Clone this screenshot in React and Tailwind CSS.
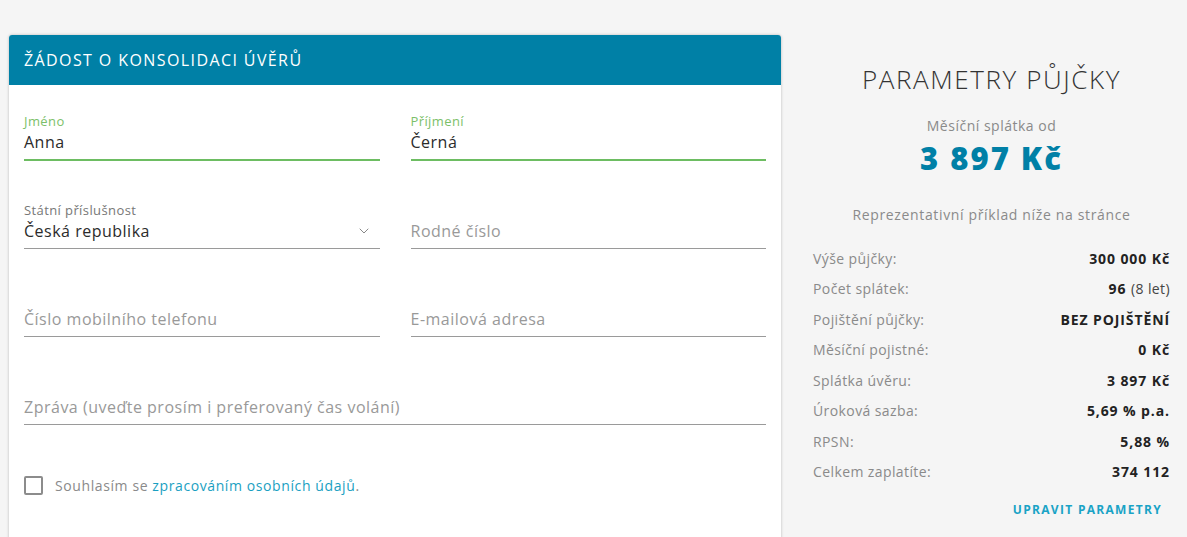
import { ChevronDown } from 'lucide-react'

const font = { fontFamily: '"Open Sans", "Noto Sans", sans-serif' }

function Field({ label, value, placeholder, active, select, className = '' }) {
  return (
    <div className={`flex flex-col ${className}`}>
      <span className={`h-4 text-[13px] leading-4 tracking-[0.4px] ${active ? 'text-[#7cbf6a]' : 'text-[#777]'}`}>
        {label}
      </span>
      <div
        className={`mt-[2px] flex items-center justify-between pb-[6px] ${
          active ? 'border-b-2 border-[#6dbd62]' : 'border-b border-[#9a9a9a]'
        }`}
      >
        <span className={`text-[16px] leading-[22px] tracking-[0.5px] ${value ? 'text-[#2b2b2b]' : 'text-[#999]'}`}>
          {value || placeholder}
        </span>
        {select && <ChevronDown className="mr-2 h-4 w-4 text-[#888]" strokeWidth={1.5} />}
      </div>
    </div>
  )
}

function Row({ label, children }) {
  return (
    <div className="flex h-[30.5px] items-center justify-between text-[14px] tracking-[0.4px]">
      <span className="text-[#8a8a8a]">{label}</span>
      <span className="font-bold tracking-[0.9px] text-[#222]">{children}</span>
    </div>
  )
}

export default function App() {
  return (
    <div className="flex min-h-screen bg-[#f5f5f5] pl-[9px] pt-[35px]" style={font}>
      <div className="h-[520px] w-[772px] overflow-hidden rounded-t-[3px] bg-white shadow-[0_0_3px_rgba(0,0,0,0.25)]">
        <div className="flex h-[50px] items-center bg-[#0080a6] px-[15px] text-[16px] tracking-[1.4px] text-white">
          ŽÁDOST O KONSOLIDACI ÚVĚRŮ
        </div>
        <div className="px-[15px] pt-[28px]">
          <div className="grid grid-cols-2 gap-x-[31px] gap-y-[41px]">
            <Field label="Jméno" value="Anna" active />
            <Field label="Příjmení" value="Černá" active />
            <Field label="Státní příslušnost" value="Česká republika" select />
            <Field placeholder="Rodné číslo" />
            <Field placeholder="Číslo mobilního telefonu" />
            <Field placeholder="E-mailová adresa" />
            <Field placeholder="Zpráva (uveďte prosím i preferovaný čas volání)" className="col-span-2" />
          </div>
          <div className="mt-[50px] flex items-center gap-[12px]">
            <span className="h-[19px] w-[19px] rounded-[2px] border-2 border-[#8c8c8c]" />
            <span className="text-[14px] tracking-[0.6px] text-[#8a8a8a]">
              Souhlasím se <span className="text-[#1a9fc2]">zpracováním osobních údajů</span>.
            </span>
          </div>
        </div>
      </div>
      <div className="ml-[15px] flex w-[391px] flex-col px-[17px] pt-[28px]">
        <h1 className="text-center text-[26px] font-light leading-8 tracking-[1.6px] text-[#333]">PARAMETRY PŮJČKY</h1>
        <p className="mt-[21px] text-center text-[14px] leading-5 tracking-[0.5px] text-[#8a8a8a]">Měsíční splátka od</p>
        <p className="mt-[4px] text-center text-[31px] font-extrabold leading-9 tracking-[2px] text-[#0080a6]">3 897 Kč</p>
        <p className="mt-[29px] text-center text-[14px] leading-5 tracking-[0.65px] text-[#8a8a8a]">
          Reprezentativní příklad níže na stránce
        </p>
        <div className="mt-[18px] flex flex-col">
          <Row label="Výše půjčky:">300 000 Kč</Row>
          <Row label="Počet splátek:">
            96 <span className="font-normal tracking-[0.4px] text-[#444]">(8 let)</span>
          </Row>
          <Row label="Pojištění půjčky:">BEZ POJIŠTĚNÍ</Row>
          <Row label="Měsíční pojistné:">0 Kč</Row>
          <Row label="Splátka úvěru:">3 897 Kč</Row>
          <Row label="Úroková sazba:">5,69 % p.a.</Row>
          <Row label="RPSN:">5,88 %</Row>
          <Row label="Celkem zaplatíte:">374 112</Row>
        </div>
        <div className="mt-[14px] flex justify-end pr-[8px]">
          <span className="text-[12px] font-bold tracking-[1.3px] text-[#1aa3c6]">UPRAVIT PARAMETRY</span>
        </div>
      </div>
    </div>
  )
}
